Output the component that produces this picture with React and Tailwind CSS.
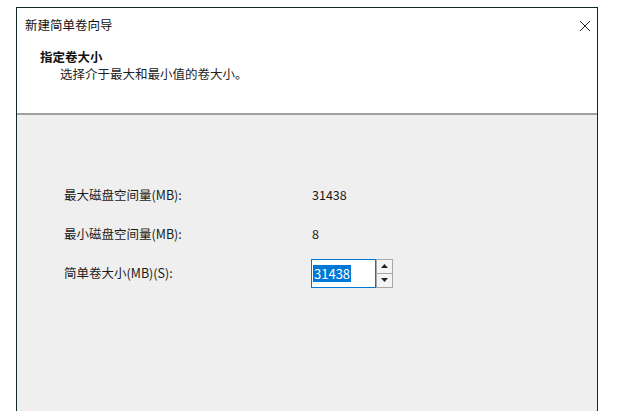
import React from 'react'

const font = { fontFamily: '"Noto Sans CJK SC", "Liberation Sans", sans-serif' }

const Row = ({ label, children }) => (
  <div className="flex items-center h-[28px]">
    <div className="w-[247px] text-[12.5px] text-[#1a1a1a]">{label}</div>
    {children}
  </div>
)

export default function App() {
  return (
    <div className="w-[629px] h-[411px] bg-white pt-[7px] pl-[16px] overflow-hidden" style={font}>
      <div className="w-[582px] h-[420px] border-l border-t border-r border-[#0f2a2a] flex flex-col">
        {/* header */}
        <div className="h-[107px] bg-white border-b-2 border-[#a0a0a0] flex flex-col">
          <div className="flex items-center justify-between h-[35px] pl-[8px] pr-[6px]">
            <span className="text-[12.5px] text-[#111]">新建简单卷向导</span>
            <svg width="12" height="12" viewBox="0 0 12 12">
              <path d="M1 1 L11 11 M11 1 L1 11" stroke="#222" strokeWidth="1" />
            </svg>
          </div>
          <div className="pl-[23px] pt-[6px] text-[12.5px] font-bold text-[#111] leading-[16px]">指定卷大小</div>
          <div className="pl-[43px] text-[12.5px] text-[#222] leading-[17px]">选择介于最大和最小值的卷大小。</div>
        </div>
        {/* body */}
        <div className="flex-1 bg-[#efefef] pl-[47px] pt-[66px] flex flex-col gap-[11px]">
          <Row label="最大磁盘空间量(MB):">
            <span className="text-[12.5px] text-[#1a1a1a] pl-[1px]">31438</span>
          </Row>
          <Row label="最小磁盘空间量(MB):">
            <span className="text-[12.5px] text-[#1a1a1a] pl-[1px]">8</span>
          </Row>
          <Row label="简单卷大小(MB)(S):">
            <div className="flex items-stretch h-[29px]">
              <div className="w-[65px] bg-white border border-[#0078d7] flex items-center pl-[1px]">
                <span className="bg-[#0078d7] text-white text-[13px] leading-[17px] px-[1px]">31438</span>
              </div>
              <div className="w-[17px] border border-[#a8a8a8] bg-[#f4f4f4] flex flex-col">
                <div className="flex-1 flex items-center justify-center border-b border-[#a8a8a8]">
                  <svg width="7" height="4" viewBox="0 0 7 4"><path d="M3.5 0 L7 4 L0 4 Z" fill="#222" /></svg>
                </div>
                <div className="flex-1 flex items-center justify-center">
                  <svg width="7" height="4" viewBox="0 0 7 4"><path d="M0 0 L7 0 L3.5 4 Z" fill="#222" /></svg>
                </div>
              </div>
            </div>
          </Row>
        </div>
      </div>
    </div>
  )
}
